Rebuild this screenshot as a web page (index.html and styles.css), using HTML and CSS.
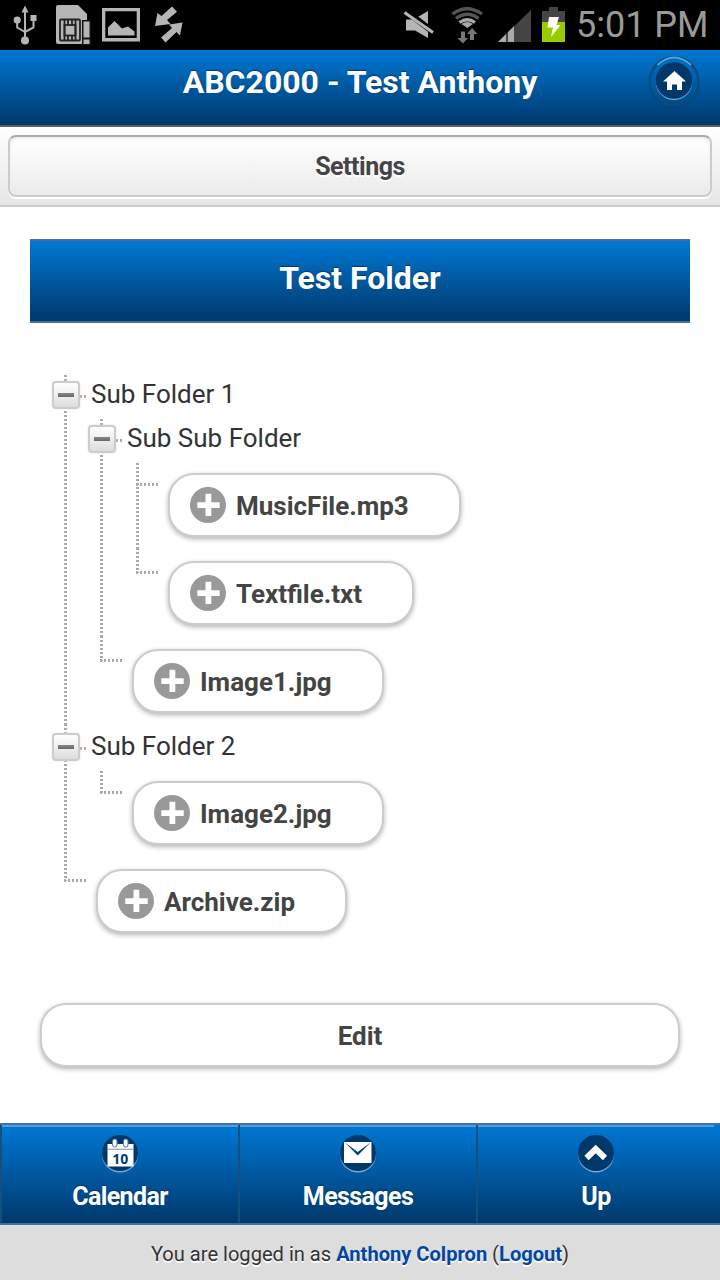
FILE: index.html
```html
<!DOCTYPE html>
<html lang="en">
<head>
<meta charset="UTF-8">
<meta name="viewport" content="width=device-width, initial-scale=1.0">
<title>ABC2000 - Test Anthony</title>
<link rel="stylesheet" href="styles.css">
</head>
<body>
<svg class="defs" width="0" height="0">
    <symbol id="plus" viewBox="0 0 36 36">
        <circle cx="18" cy="18" r="18" fill="#999"/>
        <path d="M15.500 6.800h5.800v8.400h8.400v5.800h-8.400v8h-5.800v-8H7.300v-5.800h8.200z" fill="#fff"/>
    </symbol>
</svg>

<div class="status-bar">
    <svg class="notifications" width="200" height="50" viewBox="0 0 200 50" fill="#b4b6b4">
        <!-- usb -->
        <path d="M25 5.500l3.500 7h-7z"/>
        <rect x="30.500" y="15" width="6" height="6"/>
        <circle cx="17.200" cy="20" r="3.600"/>
        <circle cx="25" cy="40.500" r="4"/>
        <path d="M25 10v30M17.200 21v6.500L25 32M33.500 19v8.500L25 32" fill="none" stroke="#b4b6b4" stroke-width="2"/>
        <!-- sim card -->
        <path d="M58 5h20l9 9v29.500q0 .500-.500.500H58q-2 0-2-2V7q0-2 2-2z"/>
        <g fill="none" stroke="#222" stroke-width="1.800">
            <rect x="60" y="19.500" width="20" height="21" rx="1"/>
            <rect x="64.500" y="25" width="11" height="10.500"/>
            <path d="M64.500 20v20M75.500 20v20M68 20v5M72 20v5M68 36v5M72 36v5"/>
        </g>
        <path d="M82 20h9v25h-9z" fill="#111"/>
        <path d="M83.500 21.500h6v16h-6zM83.500 39.500h6v4.500h-6z"/>
        <!-- picture -->
        <path d="M102 8h38v33.500h-38zM105.300 11.300v26.800h31.400V11.300z" fill-rule="evenodd"/>
        <path d="M108 35.500v-8l6.500-6.500 7.500 7.500 6-2 6.500 5v4z"/>
        <!-- sync arrows -->
        <path d="M172 6.500l5 5.200-10 8.300 3.500 4L155 26l2.500-13 4 3z"/>
        <path d="M182.500 22.500L180 35.500l-3.500-3.500-11 10.500-4.500-5 11-9.500-3-3.500z"/>
    </svg>
    <div class="system">
        <svg width="176" height="50" viewBox="400 0 176 50">
            <!-- muted speaker -->
            <path d="M406 19.500h7.500L428 11v27l-13-7.500h-9z" fill="#b4b6b4"/>
            <path d="M404 9.500l30 23" stroke="#000" stroke-width="6"/>
            <path d="M404.500 12.500l28.500 20" stroke="#b4b6b4" stroke-width="3"/>
            <!-- wifi -->
            <g fill="none" stroke-width="3.200">
                <path d="M452.500 14q14.500-10.500 29.500 0" stroke="#555"/>
                <path d="M456 18.500q11.500-8.500 22.500 0" stroke="#555"/>
                <path d="M459.500 22.500q8-5.500 15.500 0" stroke="#aaa"/>
            </g>
            <path d="M461.500 24q5.700-4 11.500 0l-5.700 4z" fill="#aaa"/>
            <path d="M461 31.500h4V38h3l-5 5.500-5.500-5.500h3.500zM472 28l5.500 6H474v6h-4v-6h-3z" fill="#777"/>
            <!-- signal -->
            <path d="M498 42L531 10v32z" fill="#444"/>
            <path d="M498 42l8-8v8zM508 42V32l6-6v16z" fill="#aaa"/>
            <!-- battery -->
            <path d="M549 7h9v4h7v11h-23V11h7z" fill="#454545"/>
            <path d="M542 22h23v20h-23z" fill="#99cc00"/>
            <path d="M549 17h10l-2.500 8h4L551 37l2-9.500h-5.500z" fill="#fff"/>
        </svg>
        <span class="clock">5:01 PM</span>
    </div>
</div>

<header class="header">
    <h1>ABC2000 - Test Anthony</h1>
    <a class="home" href="#">
        <svg width="56" height="56" viewBox="0 0 56 56">
            <circle cx="28" cy="29.500" r="24.500" fill="none" stroke="#00427a" stroke-width="3" opacity=".35"/>
            <circle cx="28" cy="28" r="24.300" fill="none" stroke="#0d4b78" stroke-width="1.600"/>
            <path d="M11.500 12Q28-3 45 12" fill="none" stroke="#5aa2d8" stroke-width="1.700"/>
            <circle cx="28" cy="29" r="18.200" fill="#6fa3cc"/>
            <circle cx="28" cy="27.500" r="18.300" fill="#00386b"/>
            <path d="M28.500 18L40 28.500h-4V37h-5v-5.500h-5V37h-5v-8.500h-4z" fill="#fff"/>
        </svg>
    </a>
</header>

<div class="toolbar">
    <a class="settings" href="#">Settings</a>
</div>

<main class="content">
    <h2 class="folder-title">Test Folder</h2>

    <ul class="tree">
        <li>
            <div class="folder"><span class="toggle"></span>Sub Folder 1</div>
            <ul>
                <li>
                    <div class="folder"><span class="toggle"></span>Sub Sub Folder</div>
                    <ul>
                        <li><a class="button file" href="#"><svg><use href="#plus"/></svg>MusicFile.mp3</a></li>
                        <li><a class="button file" href="#"><svg><use href="#plus"/></svg>Textfile.txt</a></li>
                    </ul>
                </li>
                <li><a class="button file" href="#"><svg><use href="#plus"/></svg>Image1.jpg</a></li>
            </ul>
        </li>
        <li>
            <div class="folder"><span class="toggle"></span>Sub Folder 2</div>
            <ul>
                <li><a class="button file" href="#"><svg><use href="#plus"/></svg>Image2.jpg</a></li>
            </ul>
        </li>
        <li><a class="button file" href="#"><svg><use href="#plus"/></svg>Archive.zip</a></li>
    </ul>

    <a class="button edit" href="#">Edit</a>
</main>

<footer>
    <nav class="navbar">
        <a href="#">
            <svg width="36" height="38" viewBox="0 0 36 38">
                <circle cx="18" cy="19.500" r="18" fill="#7ba7ce"/>
                <circle cx="18" cy="18" r="18" fill="#00386b"/>
                <path d="M5.500 9h26v22.500h-26z" fill="#fff"/>
                <path d="M6 14.300h25" stroke="#8aa9c4" stroke-width="1.200"/>
                <rect x="10.500" y="4" width="4.500" height="8" rx="2" fill="#fff" stroke="#4a779f"/>
                <rect x="21.500" y="4" width="4.500" height="8" rx="2" fill="#fff" stroke="#4a779f"/>
                <text x="18.300" y="28.500" text-anchor="middle" class="day">10</text>
            </svg>
            <span>Calendar</span>
        </a>
        <a href="#">
            <svg width="36" height="38" viewBox="0 0 36 38">
                <circle cx="18" cy="19.500" r="18" fill="#7ba7ce"/>
                <circle cx="18" cy="18" r="18" fill="#00386b"/>
                <path d="M4 7h27.500v21H4z" fill="#fff"/>
                <path d="M5 7.500l12.700 9.500L30.500 7.500 17.700 20.500z" fill="#00427c"/>
            </svg>
            <span>Messages</span>
        </a>
        <a href="#">
            <svg width="36" height="38" viewBox="0 0 36 38">
                <circle cx="18" cy="19.500" r="18" fill="#7ba7ce"/>
                <circle cx="18" cy="18" r="18" fill="#00386b"/>
                <path d="M8.500 23l9.200-9 9.300 9" fill="none" stroke="#fff" stroke-width="6"/>
            </svg>
            <span>Up</span>
        </a>
    </nav>
    <p class="login">You are logged in as <a href="#">Anthony Colpron</a> (<a href="#">Logout</a>)</p>
</footer>
</body>
</html>
```
FILE: styles.css
```css
* {
    box-sizing: border-box;
}

body {
    margin: 0;
    display: flex;
    flex-direction: column;
    height: 1280px;
    background: #fff;
    color: #333;
    font-family: Roboto, sans-serif;
}

a {
    text-decoration: none;
}

.defs {
    position: absolute;
}

/* phone status bar */
.status-bar {
    display: flex;
    justify-content: space-between;
    height: 50px;
    background: #000;
}

.system {
    display: flex;
    width: 320px;
}

.clock {
    color: #999b99;
    font-size: 36px;
    line-height: 50px;
    white-space: nowrap;
}

/* header */
.header {
    display: grid;
    grid-template-columns: 72px 1fr 72px;
    height: 77px;
    border-bottom: 2px solid #5d6062;
    background: linear-gradient(#0078d4, #00386b);
}

.header h1 {
    grid-column: 2;
    margin: 0;
    color: #fff;
    font-size: 32px;
    line-height: 65px;
    text-align: center;
    text-shadow: 0 -1px 1px #00386b;
}

.home {
    margin: 3px 0 0 -2px;
}

/* settings */
.toolbar {
    height: 80px;
    padding: 8px;
    border-bottom: 2px solid #ccc;
    background: linear-gradient(#fff, #e5e5e5);
}

.settings {
    display: block;
    height: 62px;
    border: 2px solid #ccc;
    border-top-color: #aaa;
    border-radius: 8px;
    background: linear-gradient(#fff, #ebebeb);
    box-shadow: 0 2px 1px #fff, inset 0 2px 3px #eee;
    color: #444;
    font-size: 25px;
    font-weight: bold;
    letter-spacing: -.5px;
    line-height: 59px;
    text-align: center;
    text-shadow: 0 2px 0 #fff;
}

/* content */
.content {
    flex: 1;
    padding: 32px 30px 0;
}

.folder-title {
    height: 84px;
    margin: 0 0 49px;
    border: solid #456f9f;
    border-width: 2px 0;
    background: linear-gradient(#0078d4, #00386b);
    color: #fff;
    font-size: 32px;
    line-height: 74px;
    text-align: center;
    text-shadow: 0 -1px 1px #00386b;
}

/* tree */
.tree {
    margin: 0 0 59px;
    padding: 0 0 0 22px;
}

.tree ul {
    margin: 0;
    padding: 0 0 0 36px;
}

.tree li {
    list-style: none;
    background:
        repeating-linear-gradient(90deg, #aaa 0 2px, transparent 2px 4px) 12px 23px / 22px 3px no-repeat,
        repeating-linear-gradient(#aaa 0 2px, transparent 2px 4px) 12px 0 / 3px 100% no-repeat;
}

.tree li:first-child {
    background-position: 12px 23px, 12px 3px;
}

.tree li:last-child {
    background-size: 22px 3px, 3px 25px;
}

.tree li:only-child {
    background-size: 22px 3px, 3px 22px;
}

.folder {
    display: flex;
    height: 44px;
    font-size: 26px;
    line-height: 45px;
}

.toggle {
    flex: none;
    width: 28px;
    height: 28px;
    margin: 9px 11px 0 0;
    border: 2px solid #ccc;
    border-radius: 4px;
    background:
        linear-gradient(#888, #666) center / 16px 4px no-repeat,
        linear-gradient(#fff, #ddd);
    box-shadow: 0 0 2px #ddd;
}

.button {
    display: flex;
    align-items: center;
    height: 64px;
    padding-top: 2px;
    border: 2px solid #ccc;
    border-radius: 26px;
    background: #fff;
    box-shadow: 0 2px 5px rgba(0, 0, 0, .3);
    color: #444;
    font-size: 26px;
    font-weight: bold;
}

.tree li:has(> .file) {
    height: 88px;
    padding: 13px 0 0 44px;
}

.file {
    width: max-content;
    padding: 2px 50px 0 20px;
}

.file svg {
    width: 36px;
    height: 36px;
    margin: -2px 10px 0 0;
}

.edit {
    justify-content: center;
    margin: 0 10px;
}

/* bottom navigation */
.navbar {
    display: flex;
    height: 102px;
    border: solid #456f9f;
    border-width: 2px 0;
    background: linear-gradient(#0078d4, #00386b);
}

.navbar a {
    display: flex;
    flex-direction: column;
    align-items: center;
    width: 238px;
    padding-top: 10px;
    border-left: 2px solid #15507a;
    box-shadow: inset 0 2px 0 #4ba0e0;
    color: #fff;
    font-size: 25px;
    font-weight: bold;
    letter-spacing: -.6px;
    line-height: 48px;
    text-shadow: 0 -1px 1px #00386b;
}

.navbar svg {
    flex: none;
}

.day {
    fill: #003d70;
    font: bold 14px "Open Sans", sans-serif;
    letter-spacing: 0;
    text-shadow: none;
}

.login {
    height: 55px;
    margin: 0;
    background: #ddd;
    font-size: 20.1px;
    line-height: 59px;
    text-align: center;
    text-shadow: 0 2px 0 #fff;
}

.login a {
    color: #0047a5;
    font-weight: bold;
}
```
